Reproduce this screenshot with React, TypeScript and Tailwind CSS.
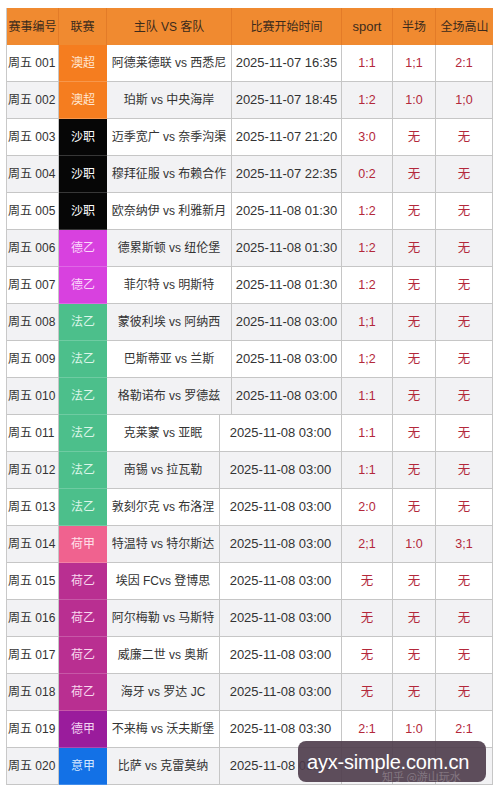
import React from "react";

type Row = {
  no: string;
  league: string;
  color: string;
  text: string;
  match: string;
  time: string;
  s: string;
  h: string;
  f: string;
  narrow: boolean;
};

const OR = { color: "bg-[#f57d1f]", text: "text-[#ffe6d2]" };
const SA = { color: "bg-[#060606]", text: "text-white" };
const DY = { color: "bg-[#d841df]", text: "text-[#fbd8fb]" };
const FY = { color: "bg-[#4cbf8b]", text: "text-[#dcf6e9]" };
const HJ = { color: "bg-[#f0628f]", text: "text-[#ffe0ea]" };
const HY = { color: "bg-[#b92f91]", text: "text-[#f8d8ee]" };
const DJ = { color: "bg-[#9a1c9c]", text: "text-[#f3d6f3]" };
const YJ = { color: "bg-[#1371e6]", text: "text-[#d6e8ff]" };

const mk = (
  no: string,
  league: string,
  c: { color: string; text: string },
  match: string,
  time: string,
  s: string,
  h: string,
  f: string,
  narrow: boolean
): Row => ({ no, league, color: c.color, text: c.text, match, time, s, h, f, narrow });

const rows: Row[] = [
  mk("周五 001", "澳超", OR, "阿德莱德联 vs 西悉尼", "2025-11-07 16:35", "1:1", "1;1", "2:1", false),
  mk("周五 002", "澳超", OR, "珀斯 vs 中央海岸", "2025-11-07 18:45", "1:2", "1:0", "1;0", false),
  mk("周五 003", "沙职", SA, "迈季宽广 vs 奈季沟渠", "2025-11-07 21:20", "3:0", "无", "无", false),
  mk("周五 004", "沙职", SA, "穆拜征服 vs 布赖合作", "2025-11-07 22:35", "0:2", "无", "无", false),
  mk("周五 005", "沙职", SA, "欧奈纳伊 vs 利雅新月", "2025-11-08 01:30", "1:2", "无", "无", false),
  mk("周五 006", "德乙", DY, "德累斯顿 vs 纽伦堡", "2025-11-08 01:30", "1:2", "无", "无", false),
  mk("周五 007", "德乙", DY, "菲尔特 vs 明斯特", "2025-11-08 01:30", "1:2", "无", "无", false),
  mk("周五 008", "法乙", FY, "蒙彼利埃 vs 阿纳西", "2025-11-08 03:00", "1;1", "无", "无", false),
  mk("周五 009", "法乙", FY, "巴斯蒂亚 vs 兰斯", "2025-11-08 03:00", "1;2", "无", "无", false),
  mk("周五 010", "法乙", FY, "格勒诺布 vs 罗德兹", "2025-11-08 03:00", "1:1", "无", "无", false),
  mk("周五 011", "法乙", FY, "克莱蒙 vs 亚眠", "2025-11-08 03:00", "1:1", "无", "无", true),
  mk("周五 012", "法乙", FY, "南锡 vs 拉瓦勒", "2025-11-08 03:00", "1:1", "无", "无", true),
  mk("周五 013", "法乙", FY, "敦刻尔克 vs 布洛涅", "2025-11-08 03:00", "2:0", "无", "无", true),
  mk("周五 014", "荷甲", HJ, "特温特 vs 特尔斯达", "2025-11-08 03:00", "2;1", "1:0", "3;1", true),
  mk("周五 015", "荷乙", HY, "埃因 FCvs 登博思", "2025-11-08 03:00", "无", "无", "无", true),
  mk("周五 016", "荷乙", HY, "阿尔梅勒 vs 马斯特", "2025-11-08 03:00", "无", "无", "无", true),
  mk("周五 017", "荷乙", HY, "威廉二世 vs 奥斯", "2025-11-08 03:00", "无", "无", "无", true),
  mk("周五 018", "荷乙", HY, "海牙 vs 罗达 JC", "2025-11-08 03:00", "无", "无", "无", true),
  mk("周五 019", "德甲", DJ, "不来梅 vs 沃夫斯堡", "2025-11-08 03:30", "2:1", "1:0", "2:1", true),
  mk("周五 020", "意甲", YJ, "比萨 vs 克雷莫纳", "2025-11-08 03:30", "", "", "", true),
];

const FONT = "font-['Liberation_Sans','Noto_Sans_CJK_SC',sans-serif]";

export default function App() {
  return (
    <div className={`relative w-[500px] h-[796px] bg-white overflow-hidden ${FONT}`}>
      <div className="pl-[6px] pt-[8px]">
        <div className="w-[487px] border-l border-[#c9c9c9]">
          {/* header */}
          <div className="flex h-[37px] bg-[#f08a30] text-[#3b2a1c] text-[12px]">
            <div className="w-[52px] flex items-center justify-center border-r border-[#e37b28]">赛事编号</div>
            <div className="w-[48px] flex items-center justify-center border-r border-[#e37b28]">联赛</div>
            <div className="w-[125px] flex items-center justify-center border-r border-[#e37b28]">主队 VS 客队</div>
            <div className="w-[110px] flex items-center justify-center border-r border-[#e37b28]">比赛开始时间</div>
            <div className="w-[51px] flex items-center justify-center border-r border-[#e37b28] text-[13px]">sport</div>
            <div className="w-[43px] flex items-center justify-center border-r border-[#e37b28]">半场</div>
            <div className="w-[57px] flex items-center justify-center">全场高山</div>
          </div>
          {rows.map((r, i) => {
            const bg = i % 2 === 0 ? "bg-white" : "bg-[#f2f2f4]";
            const cell = `flex items-center justify-center border-r border-b border-[#c6c6c6]`;
            return (
              <div key={r.no} className={`flex h-[37px] ${bg} text-[#333333]`}>
                <div className={`w-[52px] flex items-center pl-[1px] border-r border-b border-[#c6c6c6] text-[12px] whitespace-nowrap`}>
                  {r.no}
                </div>
                <div className={`w-[48px] flex items-center justify-center ${r.color} ${r.text} border-b border-white/20 text-[12px]`}>
                  {r.league}
                </div>
                <div className={`${r.narrow ? "w-[113px]" : "w-[125px]"} ${cell} text-[12px] whitespace-nowrap`}>
                  {r.match}
                </div>
                <div className={`${r.narrow ? "w-[122px]" : "w-[110px]"} ${cell} text-[13px] whitespace-nowrap`}>
                  {r.time}
                </div>
                <div className={`w-[51px] ${cell} text-[12.5px] text-[#b3283a]`}>{r.s}</div>
                <div className={`w-[43px] ${cell} text-[12.5px] text-[#b3283a]`}>{r.h}</div>
                <div className={`w-[57px] ${cell} text-[12.5px] text-[#b3283a]`}>{r.f}</div>
              </div>
            );
          })}
        </div>
      </div>

      {/* watermark overlay */}
      <div className="absolute left-[298px] top-[741px] w-[188px] h-[41px] rounded-[8px] bg-[#4d3b4a]/90 flex items-center pl-[9px]">
        <span className="text-white text-[20px] font-['Liberation_Sans',sans-serif] leading-none tracking-[-0.2px]">
          ayx-simple.com.cn
        </span>
        <span className="absolute left-[84px] bottom-[0px] text-[11px] text-white/25 font-['Noto_Sans_CJK_SC',sans-serif] leading-none">
          知乎 @游山玩水
        </span>
      </div>
    </div>
  );
}
